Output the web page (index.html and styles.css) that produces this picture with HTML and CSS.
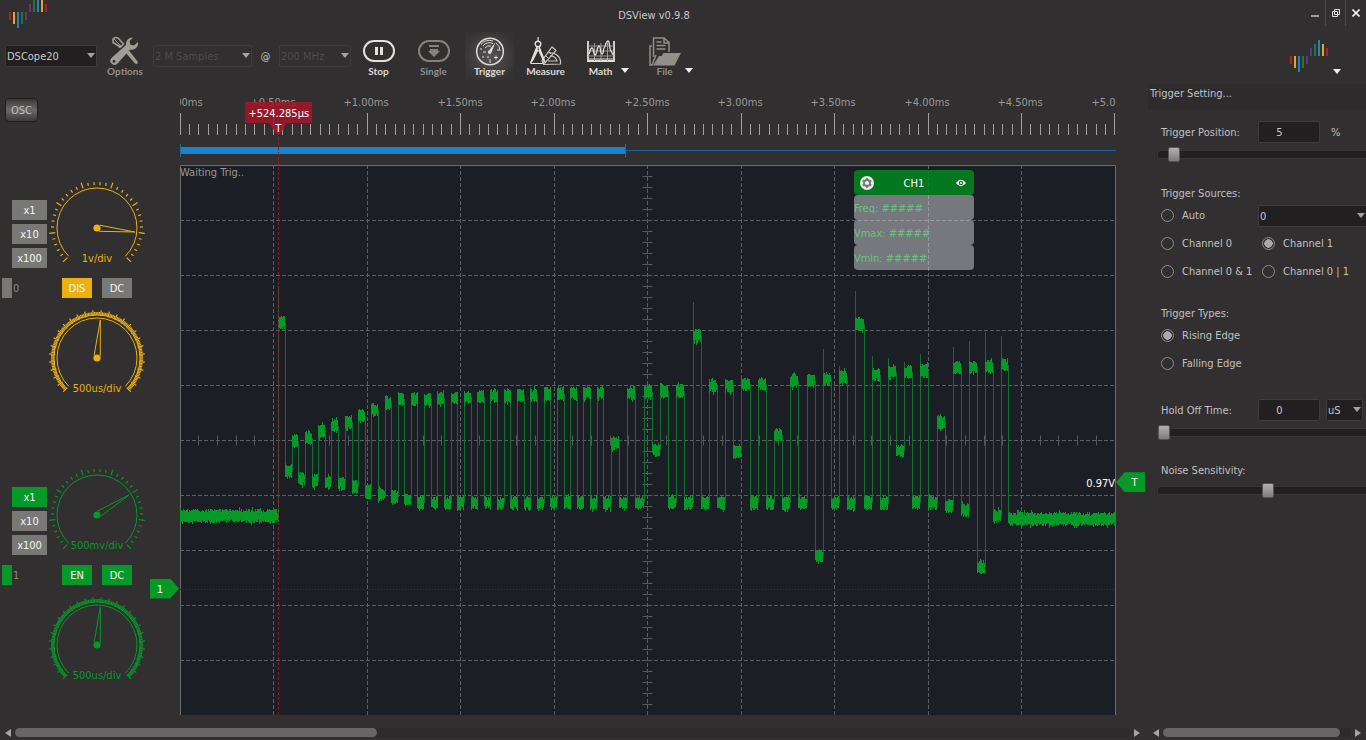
FILE: index.html
```html
<!DOCTYPE html>
<html lang="en">
<head>
<meta charset="utf-8">
<title>DSView v0.9.8</title>
<link rel="stylesheet" href="styles.css">
</head>
<body>
<svg width="0" height="0" class="defs" aria-hidden="true">
  <symbol id="logo" viewBox="0 0 38 32">
    <g fill="#b3202c"><path d="M0 16h2v8H0zM36 8h2v8h-2z"/></g>
    <g fill="#dca82b"><path d="M4 16h2v12H4zM32 4h2v12h-2z"/></g>
    <g fill="#2a7fb8"><path d="M8 16h2v16H8zM28 0h2v16h-2z"/></g>
    <g fill="#1f7a3a"><path d="M12 16h2v12h-2zM24 4h2v12h-2z"/></g>
    <g fill="#64387c"><path d="M16 16h2v8h-2zM20 8h2v8h-2z"/></g>
  </symbol>
</svg>

<header class="titlebar">
  <svg class="titlebar-logo"><use href="#logo"/></svg>
  <h1>DSView v0.9.8</h1>
  <div class="window-buttons">
    <button aria-label="Minimize"><svg viewBox="0 0 10 10"><path d="M1 8h8" stroke="#ddd" stroke-width="1.3"/></svg></button>
    <button aria-label="Restore"><svg viewBox="0 0 10 10"><path d="M3.500 1.500h5v5h-5zM1.500 3.500h5v5h-5z" fill="none" stroke="#ddd"/></svg></button>
    <button aria-label="Close"><svg viewBox="0 0 10 10"><path d="M1.500 1.500l7 7m0-7l-7 7" stroke="#fff" stroke-width="1.700"/></svg></button>
  </div>
</header>

<nav class="toolbar">
  <span class="combo combo-device"><select aria-label="Device"><option>DSCope20</option></select></span>
  <button class="tool tool-options dim">
    <svg viewBox="0 0 32 28">
      <path d="M4 2l2-1.500 3 .5 5.500 6-3 3L4 5.500z" fill="none" stroke="#a09e96" stroke-width="1.500"/>
      <path d="M5 2l8 8M4 5l7 6" stroke="#a09e96"/>
      <path d="M17 16l3-2.500 9 11.500-1 2-2-.5z" fill="#a09e96"/>
      <path d="M24 .500a6.500 6.500 0 0 0-7 7.500L2.500 21a4 4 0 1 0 6 5.500L21 12.500a6.500 6.500 0 0 0 8-7.500l-4 3.500-3.500-.8-1-3.400zM5 22.800a1.500 1.500 0 1 1 0 3 1.500 1.500 0 0 1 0-3" fill="#a09e96" fill-rule="evenodd"/>
    </svg>
    <span>Options</span>
  </button>
  <span class="combo combo-samples off"><select aria-label="Sample count" disabled><option>2 M Samples</option></select></span>
  <span class="at">@</span>
  <span class="combo combo-rate off"><select aria-label="Sample rate" disabled><option>200 MHz</option></select></span>
  <button class="tool">
    <svg viewBox="0 0 32 28"><rect x="1" y="4" width="30" height="20" rx="10" fill="none" stroke="#e2e0db" stroke-width="2"/><path d="M12 10h3v8h-3zM17 10h3v8h-3z" fill="#e2e0db"/></svg>
    <span>Stop</span>
  </button>
  <button class="tool dim">
    <svg viewBox="0 0 32 28"><rect x="1" y="4" width="30" height="20" rx="10" fill="none" stroke="#85837c" stroke-width="2"/><path d="M11 8h10v2H11zM12 12h8v2h2l-6 6-6-6h2z" fill="#85837c"/></svg>
    <span>Single</span>
  </button>
  <button class="tool active">
    <svg viewBox="0 0 32 28">
      <circle cx="16" cy="14.500" r="13.300" fill="none" stroke="#dddbd6" stroke-width="1.500"/>
      <path d="M7 7.500a11 11 0 0 1 12-3.500M9 9a8 8 0 0 1 10-2.500M11 11a5.500 5.500 0 0 1 6-2M22 6a10 10 0 0 1 4 8" fill="none" stroke="#dddbd6"/>
      <path d="M21.500 5l-4 10.500a1.800 1.800 0 1 1-2.500-2z" fill="#dddbd6"/>
      <path d="M22 18.500v4m-2-2h4M16 22v4M9 15h3M13 20h2M23 13h2M8 20h2M6 12h2" stroke="#dddbd6"/>
    </svg>
    <span>Trigger</span>
  </button>
  <button class="tool">
    <svg viewBox="0 0 32 28">
      <path d="M13 27.500L30.500 27v-3a10 10 0 0 0-12-8M18 24h9a7 7 0 0 0-7-5M12 23.500L22 10l4 3.500L14 27z" fill="none" stroke="#c9c7c2" stroke-width="1.200"/>
      <path d="M13 23l2 2m1-6l2 2m1-6l2 2" stroke="#c9c7c2"/>
      <path d="M7.500 0h1.200v4H7.500zM6.500 9L1 23l-1 4 3-3 6-12zM9.500 9l5.500 14 .5 3-3-3L7.500 12z" fill="#e2e0db"/>
      <circle cx="8" cy="7" r="2.800" fill="none" stroke="#e2e0db" stroke-width="1.400"/>
      <path d="M1 24v2.500h12V24" fill="none" stroke="#e2e0db"/>
    </svg>
    <span>Measure</span>
  </button>
  <button class="tool menu">
    <svg viewBox="0 0 32 28">
      <path d="M3 4v20h26V4" fill="none" stroke="#e2e0db" stroke-width="1.800"/>
      <path d="M3 9h26M3 14h26M3 19h26M9.500 6v18M16 6v18M22.500 6v18" stroke="#9a9894"/>
      <path d="M4 17c1-2 1-6 3-6s1 7 3 7 2-9 4-9 1 8 3 8 1-6 2-6 2-7 4-7 1 8 3 10 1 4 2 3" fill="none" stroke="#e2e0db" stroke-width="1.300"/>
      <path d="M4 22h24" stroke="#e2e0db"/>
    </svg>
    <span>Math</span>
  </button>
  <button class="tool menu dim">
    <svg viewBox="0 0 32 28">
      <path d="M4.500 20V1H15l5 4.500V15M15 1v5h5M7.500 5h5M7.500 8.500h9M7.500 12h9" fill="none" stroke="#918f88" stroke-width="1.500"/>
      <path d="M3 9H1v19h2l4-10" fill="none" stroke="#918f88" stroke-width="1.500"/>
      <path d="M4 28.500L10 19h2.500l2-3H32l-6.500 12.500z" fill="#918f88"/>
    </svg>
    <span>File</span>
  </button>
  <button class="brand" aria-label="DreamSourceLab"><svg><use href="#logo"/></svg></button>
</nav>

<div class="workspace">
  <div class="device">
    <div class="device-body">
      <aside class="channels">
        <button class="osc">OSC</button>
        <section class="channel ch0">
          <div class="probe">
            <button>x1</button><button>x10</button><button>x100</button>
          </div>
          <svg class="dial" viewBox="0 0 98 98" data-major="7" data-turn="96" data-label="1v/div"></svg>
          <div class="switches"><span class="handle"></span><span class="index">0</span><button class="on">DIS</button><button>DC</button></div>
          <svg class="dial" viewBox="0 0 98 98" data-major="27" data-turn="5" data-label="500us/div"></svg>
        </section>
        <section class="channel ch1">
          <div class="probe">
            <button class="on">x1</button><button>x10</button><button>x100</button>
          </div>
          <svg class="dial" viewBox="0 0 98 98" data-major="7" data-turn="58" data-label="500mv/div"></svg>
          <div class="switches"><span class="handle"></span><span class="index">1</span><button class="on">EN</button><button class="on">DC</button></div>
          <svg class="dial" viewBox="0 0 98 98" data-major="27" data-turn="5" data-label="500us/div"></svg>
        </section>
      </aside>

      <main class="scope">
        <div class="ruler">
          <svg id="ruler" viewBox="0 0 936 52" preserveAspectRatio="none"></svg>
        </div>
        <div class="overview"><span class="window"></span></div>
        <div class="view">
          <svg id="plot" viewBox="0 0 936 550" preserveAspectRatio="none"></svg>
          <p class="status">Waiting Trig..</p>
          <section class="measure">
            <header>
              <button aria-label="Settings"><svg viewBox="0 0 14 14"><circle cx="7" cy="7" r="7" fill="#e8eee8"/><circle cx="7" cy="7" r="3" fill="none" stroke="#777" stroke-width="1.800"/><path d="M7 2v2M7 10v2M2.700 4.500l1.600 1M9.700 8.500l1.600 1M2.700 9.500l1.600-1M9.700 5.500l1.600-1" stroke="#777" stroke-width="1.800"/></svg></button>
              <h2>CH1</h2>
              <button aria-label="Show"><svg viewBox="0 0 14 14"><path d="M2 7q5-6.500 10 0q-5 6.500-10 0z" fill="#fff"/><circle cx="7" cy="7" r="2.200" fill="#087525"/><circle cx="7" cy="7" r="1" fill="#fff"/></svg></button>
            </header>
            <p>Freq: #####</p>
            <p>Vmax: #####</p>
            <p>Vmin: #####</p>
          </section>
          <span class="level">0.97V</span>
          <span class="tag tag-zero">1</span>
          <span class="tag tag-trigger">T</span>
        </div>
        <div class="cursor"><span class="cursor-time">+524.285µs</span><span class="cursor-tip">T</span></div>
      </main>
    </div>
    <div class="scrollbar scrollbar-main"><button class="prev" aria-label="Scroll left"></button><div class="track"><span class="thumb thumb-main"></span></div><button class="next" aria-label="Scroll right"></button></div>
  </div>

  <aside class="dock">
    <h2>Trigger Setting...</h2>
    <form class="settings">
      <div class="row"><label for="pos">Trigger Position:</label><input id="pos" type="text" value="5"><span class="unit">%</span></div>
      <input type="range" aria-label="Trigger position" value="5">
      <fieldset>
        <legend>Trigger Sources:</legend>
        <div class="choices">
          <label><input type="radio" name="src">Auto</label>
          <span class="combo combo-source"><select aria-label="Source channel"><option>0</option></select></span>
          <label><input type="radio" name="src">Channel 0</label>
          <label><input type="radio" name="src" checked>Channel 1</label>
          <label><input type="radio" name="src">Channel 0 &amp; 1</label>
          <label><input type="radio" name="src">Channel 0 | 1</label>
        </div>
      </fieldset>
      <fieldset>
        <legend>Trigger Types:</legend>
        <label><input type="radio" name="type" checked>Rising Edge</label>
        <label><input type="radio" name="type">Falling Edge</label>
      </fieldset>
      <div class="row row-hold"><label for="hold">Hold Off Time:</label><input id="hold" type="text" value="0"><span class="combo combo-unit"><select aria-label="Time unit"><option>uS</option></select></span></div>
      <input type="range" aria-label="Hold off time" value="0">
      <label class="noise" for="noise">Noise Sensitivity:</label>
      <input id="noise" type="range" value="50">
    </form>
    <div class="scrollbar"><button class="prev" aria-label="Scroll left"></button><div class="track"><span class="thumb thumb-dock"></span></div><button class="next" aria-label="Scroll right"></button></div>
  </aside>
</div>
<script src="script.js"></script>
</body>
</html>
```
FILE: styles.css
```css
* { box-sizing: border-box; }
:root {
  --bg: #312f30;
  --field: #211f20;
  --line: #3d3b3c;
  --text: #c0c0c0;
  --green: #059927;
  --amber: #edb013;
}
body {
  margin: 0;
  height: 100vh;
  display: flex;
  flex-direction: column;
  overflow: hidden;
  background: var(--bg);
  color: var(--text);
  font: 11px/16px "DejaVu Sans Condensed", "DejaVu Sans", sans-serif;
}
h1, h2, p { margin: 0; font-size: 11px; font-weight: normal; }
button { padding: 0; border: 0; background: none; color: inherit; font: inherit; }
.defs { position: absolute; }

.titlebar {
  display: grid;
  grid-template-columns: 1fr auto 1fr;
  height: 30px;
  flex: none;
  padding: 0 1px 0 9px;
}
.titlebar-logo { width: 38px; height: 32px; margin-top: -4px; }
.titlebar h1 { padding: 8px 66px 0 0; color: #c8c8c8; }
.window-buttons { display: flex; justify-content: flex-end; height: 26px; }
.window-buttons button { width: 20px; }
.window-buttons button + button { border-left: 1px solid #4c4a4b; }
.window-buttons svg { width: 10px; height: 10px; vertical-align: middle; }

.toolbar { display: flex; align-items: flex-start; height: 54px; flex: none; padding: 2px 26px 0 5px; }
.combo { position: relative; display: block; }
.combo::after {
  content: "";
  position: absolute;
  right: 2px;
  top: 8px;
  border: solid transparent;
  border-width: 5px 4px 0;
  border-top-color: #a3a3a3;
  pointer-events: none;
}
select, input[type=text] {
  width: 100%;
  height: 22px;
  padding: 1px 1px 0;
  border: 1px solid var(--line);
  border-radius: 2px;
  background: var(--field);
  color: #c8c8c8;
  font: inherit;
  appearance: none;
}
.toolbar .combo { margin-top: 13px; }
.off select { background: none; color: #4d4b4c; opacity: 1; }
.combo-device { width: 92px; }
.combo-samples { width: 99px; }
.combo-rate { width: 72px; }
.at { width: 27px; margin-top: 17px; text-align: center; }

.tool {
  display: flex;
  flex-direction: column;
  align-items: center;
  justify-content: flex-start;
  width: 55px;
  height: 48px;
  padding-top: 5px;
  color: #dcdad5;
  font: bold 10px/12px Lato, "Open Sans", sans-serif;
}
.tool svg { width: 32px; height: 28px; overflow: visible; }
.tool.dim { color: #908e88; }
.tool.active { width: 49px; margin: 0 4px; background: radial-gradient(#555354, #343233 80%); }
.tool-options { width: 56px; }
.menu { position: relative; }
.menu + .menu { margin-left: 9px; }
.menu::after, .brand::after {
  content: "";
  position: absolute;
  right: -1px;
  bottom: 7px;
  border: solid transparent;
  border-width: 5px 4px 0;
  border-top-color: #eee;
}
.brand { position: relative; display: flex; align-items: flex-start; margin: 8px 0 0 auto; width: 50px; height: 40px; }
.brand::after { bottom: 6px; }
.brand svg { width: 38px; height: 32px; }

.workspace { display: flex; flex: 1; min-height: 0; }
.device { display: flex; flex-direction: column; flex: 1; min-width: 0; }
.device-body { display: flex; flex: 1; min-height: 0; padding-right: 32px; }
.channels { width: 180px; flex: none; padding: 14px 0 0 5px; }
.osc {
  display: block;
  width: 33px;
  height: 24px;
  margin-bottom: 58px;
  padding-top: 1px;
  border: 1px solid #1f1d1e;
  border-radius: 4px;
  background: linear-gradient(#3a3839, #6a6869 50%, #3a3839);
}
.channel {
  display: grid;
  grid-template-columns: 43px 98px;
  margin-bottom: 59px;
  color: var(--accent);
}
.ch0 { --accent: var(--amber); }
.ch1 { --accent: var(--green); }
.channel button { height: 20px; padding-top: 2px; background: #787874; color: #f4f4f4; }
.channel button.on { background: var(--accent); }
.probe { display: flex; flex-direction: column; gap: 4px; width: 35px; margin: 20px 0 0 7px; }
.dial { grid-column: 2; width: 98px; height: 98px; overflow: visible; font-size: 11px; }
.switches { grid-column: 1 / 3; display: flex; height: 32px; margin-left: -3px; line-height: 22px; }
.switches button { line-height: 16px; }
.handle { width: 10px; height: 20px; background: #787874; }
.ch1 .handle { background: var(--accent); }
.index { width: 50px; padding-left: 1px; color: #858585; }
.switches button { width: 30px; margin-right: 10px; }

.scope { position: relative; display: flex; flex-direction: column; flex: 1; min-width: 0; padding-bottom: 10px; }
.ruler { height: 52px; overflow: hidden; }
.ruler svg, .view > svg { display: block; width: 100%; height: 100%; }
.ruler text { fill: #999; font-size: 11px; text-anchor: middle; }
.overview { height: 29px; padding-top: 8px; background: linear-gradient(#176698, #176698) 0 14px / 100% 1px no-repeat; }
.window {
  display: block;
  width: 47.7%;
  height: 13px;
  border: solid #1c6ea5;
  border-width: 0 1px;
  background: linear-gradient(#1683d0, #1683d0) 0 3px / 100% 7px no-repeat;
}
.view { position: relative; flex: 1; min-height: 0; background: #1b1e24; }
.status { position: absolute; left: 0; top: 0; color: #999; }
.measure { position: absolute; left: 72%; top: 5px; width: 120px; color: #65c47c; }
.measure header {
  display: flex;
  align-items: center;
  justify-content: space-between;
  height: 25px;
  padding: 0 6px;
  border-radius: 4px;
  background: rgba(0, 135, 30, .85);
  color: #fff;
}
.measure h2 { padding-top: 2px; }
.measure svg { display: block; width: 14px; height: 14px; }
.measure p { height: 25px; border-radius: 4px; background: rgba(210, 210, 215, .5); line-height: 27px; }
.level { position: absolute; right: 1px; top: 56.500%; color: #fff; }
.tag { position: absolute; width: 29px; height: 20px; margin-top: -10px; background: var(--green); color: #fff; line-height: 22px; text-align: center; }
.tag-zero { left: -30px; top: 77%; padding-right: 9px; clip-path: polygon(0 0, 70% 0, 100% 50%, 70% 100%, 0 100%); }
.tag-trigger { right: -29px; top: 57.700%; padding-left: 8px; clip-path: polygon(0 50%, 30% 0, 100% 0, 100% 100%, 30% 100%); }
.cursor { position: absolute; left: 10.500%; top: 18px; bottom: 10px; width: 0; border-left: 1px dashed #8f1d2b; }
.cursor span { position: absolute; background: rgba(160, 22, 40, .88); color: #fff; text-align: center; }
.cursor-time { left: -34px; top: 0; width: 67px; height: 21px; line-height: 23px; }
.cursor-tip { left: -10px; top: 21px; width: 18px; height: 11px; line-height: 11px; clip-path: polygon(0 0, 100% 0, 60% 100%, 40% 100%); }

.scrollbar { display: flex; align-items: center; height: 15px; flex: none; padding: 0 5px; }
.scrollbar-main { padding-right: 8px; }
.scrollbar button { border: solid transparent; border-width: 4px 0; }
.scrollbar .prev { border-right: 6px solid #a5a5a5; }
.scrollbar .next { border-left: 6px solid #a5a5a5; }
.track { flex: 1; height: 9px; margin: 0 4px; border-radius: 5px; background: #2c2a2b; }
.thumb { display: block; height: 9px; border-radius: 5px; background: #676566; }
.thumb-main { width: 32.500%; }
.thumb-dock { width: 94%; }

.dock { display: flex; flex-direction: column; width: 218px; flex: none; overflow: hidden; }
.dock h2 { height: 26px; padding: 2px; background: #2d2b2c; }
.settings { flex: 1; width: 232px; padding: 11px 0 0 10px; }
.row { display: grid; grid-template-columns: 97px 62px 40px; align-items: center; padding-left: 3px; }
.row input { text-align: center; padding-right: 20px; }
.row label, .unit { padding-top: 2px; }
.unit { padding-left: 11px; }
.row-hold { grid-template-columns: 97px 62px 43px; margin-top: 21px; }
.row-hold .combo { margin-left: 6px; }
input[type=range] { display: block; width: 222px; height: 15px; margin: 4px 0 0 -1px; appearance: none; background: none; }
input[type=range]::-webkit-slider-runnable-track { height: 9px; border: 1px solid #383637; border-radius: 3px; background: var(--field); }
input[type=range]::-webkit-slider-thumb { appearance: none; width: 12px; height: 15px; margin-top: -4px; border: 1px solid #555; border-radius: 2px; background: linear-gradient(#b0b0b0, #7c7c7c); }
fieldset { margin: 24px 0 0; padding: 0 0 0 3px; border: 0; }
fieldset + fieldset { margin-top: 20px; }
legend { padding: 0; }
fieldset label { display: flex; align-items: center; height: 28px; white-space: nowrap; }
.choices { display: grid; grid-template-columns: 101px 1fr; align-items: center; }
.combo-source { margin-left: -4px; width: 109px; }
input[type=radio] { appearance: none; flex: none; width: 13px; height: 13px; margin: 0 8px 2px 0; border: 1px solid #8d8d8d; border-radius: 50%; }
input[type=radio]:checked { background: radial-gradient(#a9a9a9 52%, transparent 56%); }
.noise { display: block; margin: 23px 0 0 3px; }
```
FILE: script.js
```js
const NS = 'http://www.w3.org/2000/svg';

function add(parent, name, attrs, text) {
  const el = document.createElementNS(NS, name);
  for (const key in attrs) el.setAttribute(key, attrs[key]);
  if (text) el.textContent = text;
  parent.appendChild(el);
}

// Knobs: a 270 degree scale around (49, 48)
function polar(r, deg) {
  const a = deg * Math.PI / 180;
  return (49 + r * Math.sin(a)).toFixed(2) + ' ' + (48 - r * Math.cos(a)).toFixed(2);
}

document.querySelectorAll('.dial').forEach(dial => {
  const major = Number(dial.dataset.major);
  const dense = major > 7;
  const turn = Number(dial.dataset.turn);
  const steps = major * 5;
  let ticks = '';
  for (let i = 0; i <= steps; i++) {
    const a = -135 + 270 * i / steps;
    const isMajor = i % 5 === 0;
    ticks += `M${polar(isMajor ? 42 : 43, a)}L${polar(isMajor ? 48 : 46, a)}`;
  }
  const line = { fill: 'none', stroke: 'currentColor' };
  add(dial, 'path', { ...line, d: ticks, 'stroke-width': 1.2 });
  add(dial, 'path', { ...line, d: `M${polar(40, -135)}A40 40 0 1 1 ${polar(40, 135)}` });
  if (dense) add(dial, 'path', { ...line, d: `M${polar(43, -135)}A43 43 0 1 1 ${polar(43, 135)}` });
  add(dial, 'path', { ...line, d: `M${polar(4, turn - 50)}L${polar(38, turn)}L${polar(4, turn + 50)}` });
  add(dial, 'circle', { cx: 49, cy: 48, r: 3.6, fill: 'currentColor' });
  add(dial, 'text', { x: 49, y: 82, 'text-anchor': 'middle', fill: 'currentColor' }, dial.dataset.label);
});

// Time ruler
const ruler = document.getElementById('ruler');
let rulerTicks = '';
for (let i = 0; i <= 100; i++) {
  const x = Math.min(934, Math.floor(i * 9.35)) + 0.5;
  rulerTicks += `M${x} ${i % 10 ? 40 : 29}V51`;
  if (i % 10 === 0) add(ruler, 'text', { x: Math.floor(i * 9.34), y: 22 }, '+' + (i / 20).toFixed(2) + 'ms');
}
add(ruler, 'path', { d: rulerTicks, stroke: '#a0a0a0' });

// Graticule
const plot = document.getElementById('plot');
let grid = '';
let marks = '';
for (let i = 1; i < 10; i++) {
  grid += `M${Math.floor(i * 93.5) + 0.5} 0V550M0 ${i * 55 + 0.5}H936`;
}
for (let i = 1; i < 50; i++) {
  marks += `M462.5 ${i * 11 + 0.5}h10M${Math.floor(i * 18.7) + 0.5} 270.5v10`;
}
add(plot, 'path', { d: grid, stroke: '#5c5f63', 'stroke-dasharray': '4 2' });
add(plot, 'path', { d: marks, stroke: '#55595d' });
add(plot, 'path', { d: 'M0.500 550V.5H935.5V550', fill: 'none', stroke: '#6c6c6c' });
add(plot, 'path', { d: 'M0 424.5H936', stroke: '#34363a', 'stroke-dasharray': '1 2' });

// Captured pulses: [x, level, overshoot]
const pulses = [
  [282, 323, 286], [288, 472], [295, 441], [301, 479], [308, 438], [315, 481], [321, 431], [328, 483],
  [334, 426], [341, 484], [348, 422], [355, 487], [361, 416], [368, 492], [374, 410], [381, 495],
  [388, 403], [394, 497], [401, 399], [407, 499]
];
for (let k = 0; k < 15; k++) {
  const x = 414 + k * 13.29;
  pulses.push([x, 399 - Math.round(k * 0.45)]);
  pulses.push([x + 6.7, 503]);
}
pulses.push(
  [615, 443], [623, 503], [631, 393], [639, 503], [648, 392], [656, 450], [664, 391], [672, 503],
  [680, 391], [688, 503], [697, 336, 302], [705, 503], [713, 386], [721, 503], [729, 386], [737, 451],
  [745, 384], [754, 503], [761, 384], [770, 503], [778, 435], [786, 503], [794, 381], [802, 503],
  [811, 381], [819, 556], [827, 379, 349], [835, 503], [843, 377, 366], [851, 504], [859, 324, 291],
  [868, 503], [876, 375, 356], [884, 504], [892, 372, 358], [900, 451], [908, 372, 362], [916, 503],
  [924, 371, 354], [932, 503], [941, 422], [949, 506], [957, 368, 347], [965, 510], [973, 367, 341],
  [981, 567], [989, 367, 332], [997, 516], [1005, 365, 336]
);

let seed = 7;
function noise() {
  seed = (seed * 16807) % 2147483647;
  return seed / 2147483647;
}

let body = '';
function band(x0, x1, y) {
  for (let x = Math.round(x0); x < x1; x++) {
    const up = 3 + Math.round(Math.sqrt(noise()) * 4) + (noise() > 0.9 ? 2 : 0);
    const down = 3 + Math.round(Math.sqrt(noise()) * 4) + (noise() > 0.9 ? 2 : 0);
    body += `M${x - 179.5} ${y - 165 - up}v${up + down}`;
  }
}

let edges = '';
let left = 278;
let previous = 516;
pulses.forEach(([x, y, peak], i) => {
  const right = i + 1 < pulses.length ? (x + pulses[i + 1][0]) / 2 : 1008;
  const ex = Math.round(left) - 179.5;
  edges += `M${ex} ${previous - 165}V${y - 165}`;
  if (peak) edges += `M${ex} ${y - 165}V${peak - 165}`;
  band(left, right, y);
  left = right;
  previous = y;
});
edges += `M828.5 ${previous - 165}V354`;
band(180, 279, 516);
band(1008, 1116, 519);
add(plot, 'path', { d: edges, stroke: '#0e702b', fill: 'none' });
add(plot, 'path', { d: body, stroke: '#059927', fill: 'none' });
```
